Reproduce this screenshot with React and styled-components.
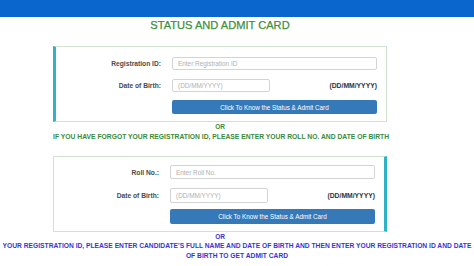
import styled, { createGlobalStyle } from "styled-components";

const Global = createGlobalStyle`
  html, body { margin: 0; padding: 0; background: #fff; }
  body { font-family: "Liberation Sans", Arial, sans-serif; width: 474px; height: 266px; overflow: hidden; }
`;

const TopBar = styled.div`
  height: 17px;
  background: #0a66cc;
`;

const Main = styled.div`
  margin-left: 53px;
  width: 334px;
  display: flex;
  flex-direction: column;
`;

const Title = styled.h2`
  margin: 2px 0 0;
  height: 27px;
  font-size: 11.1px;
  font-weight: normal;
  color: #3d8f3d;
  text-align: center;
  -webkit-text-stroke: 0.25px #3d8f3d;
`;

const Card = styled.div`
  box-sizing: border-box;
  border: 1px solid #cfe3d0;
  border-${(p) => p.$accent}: 3px solid #2fb3c6;
  padding: ${(p) => p.$pad};
  display: grid;
  grid-template-columns: 105px 1fr;
  column-gap: 11px;
  align-items: center;
`;

const Label = styled.div`
  text-align: right;
  font-size: 6.7px;
  color: #4a4a4a;
  font-weight: bold;
  white-space: nowrap;
`;

const Field = styled.div`
  display: flex;
  align-items: center;
  justify-content: space-between;
  height: ${(p) => p.$h}px;
  margin-bottom: ${(p) => p.$mb}px;
`;

const Input = styled.div`
  box-sizing: border-box;
  height: 100%;
  width: ${(p) => p.$w || "100%"};
  border: 1px solid #d4d4d4;
  border-radius: 2px;
  padding-left: 5px;
  display: flex;
  align-items: center;
  font-size: 6.4px;
  color: #b0b0b0;
  white-space: nowrap;
`;

const Hint = styled.span`
  font-size: 6.8px;
  font-weight: bold;
  color: #333;
`;

const Button = styled.div`
  grid-column: 2;
  height: ${(p) => p.$h}px;
  background: #3579b9;
  border-radius: 2px;
  color: #fff;
  font-size: 6.3px;
  display: flex;
  align-items: center;
  justify-content: center;
  white-space: nowrap;
`;

const Or = styled.div`
  text-align: center;
  font-size: 6.5px;
  font-weight: bold;
  color: ${(p) => p.$color};
  line-height: ${(p) => p.$lh}px;
`;

const Note = styled.div`
  font-size: 6.75px;
  font-weight: bold;
  color: #3a8a3a;
  white-space: nowrap;
  line-height: 10px;
  margin-bottom: 14px;
`;

const BlueNote = styled.div`
  text-align: center;
  font-size: 6.7px;
  font-weight: bold;
  color: #3535d6;
  line-height: 10px;
  width: 474px;
  white-space: pre;
`;

export default function App() {
  return (
    <>
      <Global />
      <TopBar />
      <Main>
        <Title>STATUS AND ADMIT CARD</Title>
        <Card $accent="left" $pad="10px 9px 7px 0">
          <Label style={{ marginBottom: 9 }}>Registration ID:</Label>
          <Field $h={13} $mb={9}>
            <Input>Enter Registration ID</Input>
          </Field>
          <Label style={{ marginBottom: 8 }}>Date of Birth:</Label>
          <Field $h={13} $mb={8}>
            <Input $w="98px">(DD/MM/YYYY)</Input>
            <Hint>(DD/MM/YYYY)</Hint>
          </Field>
          <Button $h={14}>Click To Know the Status &amp; Admit Card</Button>
        </Card>
        <Or $color="#3a8a3a" $lh={10}>OR</Or>
        <Note>IF YOU HAVE FORGOT YOUR REGISTRATION ID, PLEASE ENTER YOUR ROLL NO. AND DATE OF BIRTH</Note>
        <Card $accent="right" $pad="8px 9px 7px 0">
          <Label style={{ marginBottom: 9 }}>Roll No.:</Label>
          <Field $h={14} $mb={9}>
            <Input>Enter Roll No.</Input>
          </Field>
          <Label style={{ marginBottom: 6 }}>Date of Birth:</Label>
          <Field $h={15} $mb={6}>
            <Input $w="98px">(DD/MM/YYYY)</Input>
            <Hint>(DD/MM/YYYY)</Hint>
          </Field>
          <Button $h={15}>Click To Know the Status &amp; Admit Card</Button>
        </Card>
      </Main>
      <Or $color="#3535d6" $lh={9} style={{ width: 440 }}>OR</Or>
      <BlueNote>
        {"YOUR REGISTRATION ID, PLEASE ENTER CANDIDATE'S FULL NAME AND DATE OF BIRTH AND THEN ENTER YOUR REGISTRATION ID AND DATE\nOF BIRTH TO GET ADMIT CARD"}
      </BlueNote>
    </>
  );
}
